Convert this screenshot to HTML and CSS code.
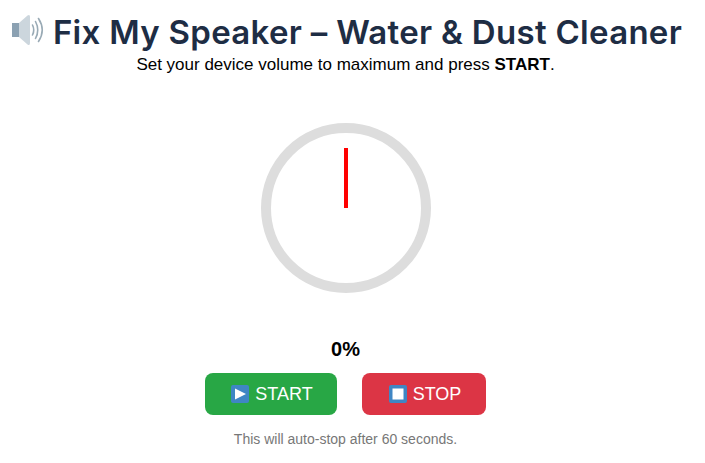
FILE: index.html
```html
<!DOCTYPE html>
<html lang="en">
<head>
<meta charset="utf-8">
<title>Fix My Speaker</title>
<link rel="stylesheet" href="styles.css">
</head>
<body>
<header class="head">
  <h1 class="title">
    <svg class="speaker" viewBox="0 0 34 30" width="34" height="30" aria-hidden="true">
      <rect x="0" y="8" width="7" height="14" fill="#8ba1b2"/>
      <path d="M7 8 L15.500 0.500 Q18 -1 18 2 V28 Q18 31 15.500 29.500 L7 22 Z" fill="#ccd6dd"/>
      <g fill="none" stroke="#99aab5" stroke-width="1.6" stroke-linecap="round">
        <path d="M20.500 10 Q23 15 20.500 20"/>
        <path d="M23.500 6.500 Q28 15 23.500 23.500"/>
        <path d="M26.500 3.500 Q34 15 26.500 26.500"/>
      </g>
    </svg>
    <span>Fix My Speaker – Water &amp; Dust Cleaner</span>
  </h1>
  <p class="sub">Set your device volume to maximum and press <strong>START</strong>.</p>
</header>
<main class="main">
  <div class="dial"><div class="needle"></div></div>
  <div class="pct">0%</div>
  <div class="actions">
    <button class="btn start" type="button">
      <svg class="ico" viewBox="0 0 18 18" width="18" height="18" aria-hidden="true"><rect width="18" height="18" rx="2" fill="#3f86c4"/><path d="M4 3.500 L15 9 L4 14.500 Z" fill="#fff"/></svg>
      START
    </button>
    <button class="btn stop" type="button">
      <svg class="ico" viewBox="0 0 18 18" width="18" height="18" aria-hidden="true"><rect width="18" height="18" rx="2" fill="#3f86c4"/><rect x="3.500" y="3.500" width="11" height="11" fill="#fff"/></svg>
      STOP
    </button>
  </div>
  <p class="note">This will auto-stop after 60 seconds.</p>
</main>
</body>
</html>
```
FILE: styles.css
```css
html, body { margin: 0; padding: 0; background: #fff; }
body {
  width: 691px;
  font-family: "Liberation Sans", Arial, sans-serif;
  color: #000;
  text-align: center;
  overflow: hidden;
}
.head { padding-top: 11px; }
.title {
  display: flex;
  justify-content: center;
  align-items: center;
  gap: 7px;
  margin: 0;
  padding-left: 3px;
  height: 42px;
  font-family: Inter, "Open Sans", sans-serif;
  font-size: 33px;
  font-weight: 600;
  letter-spacing: .3px;
  color: #1e2d44;
  white-space: nowrap;
}
.speaker { flex: none; margin-bottom: 4px; }
.sub { margin: 3px 0 0; font-size: 17px; line-height: 18px; }
.main { display: flex; flex-direction: column; align-items: center; }
.dial {
  box-sizing: border-box;
  width: 170px;
  height: 170px;
  margin-top: 49px;
  border: 10px solid #ddd;
  border-radius: 50%;
  display: flex;
  justify-content: center;
  padding-top: 15px;
}
.needle { width: 4px; height: 60px; background: #f00; }
.pct { margin-top: 44px; font-size: 20px; font-weight: 700; line-height: 24px; }
.actions { display: flex; gap: 25px; margin-top: 12px; }
.btn {
  display: flex;
  align-items: center;
  justify-content: center;
  gap: 6px;
  height: 42px;
  padding: 0 0 0 2px;
  border: 0;
  border-radius: 8px;
  color: #fff;
  font: 18px "Liberation Sans", Arial, sans-serif;
}
.start { width: 132px; background: #28a745; }
.stop { width: 124px; background: #dc3545; }
.note { margin: 16px 0 0; font-size: 14px; line-height: 16px; color: #777; }
```
